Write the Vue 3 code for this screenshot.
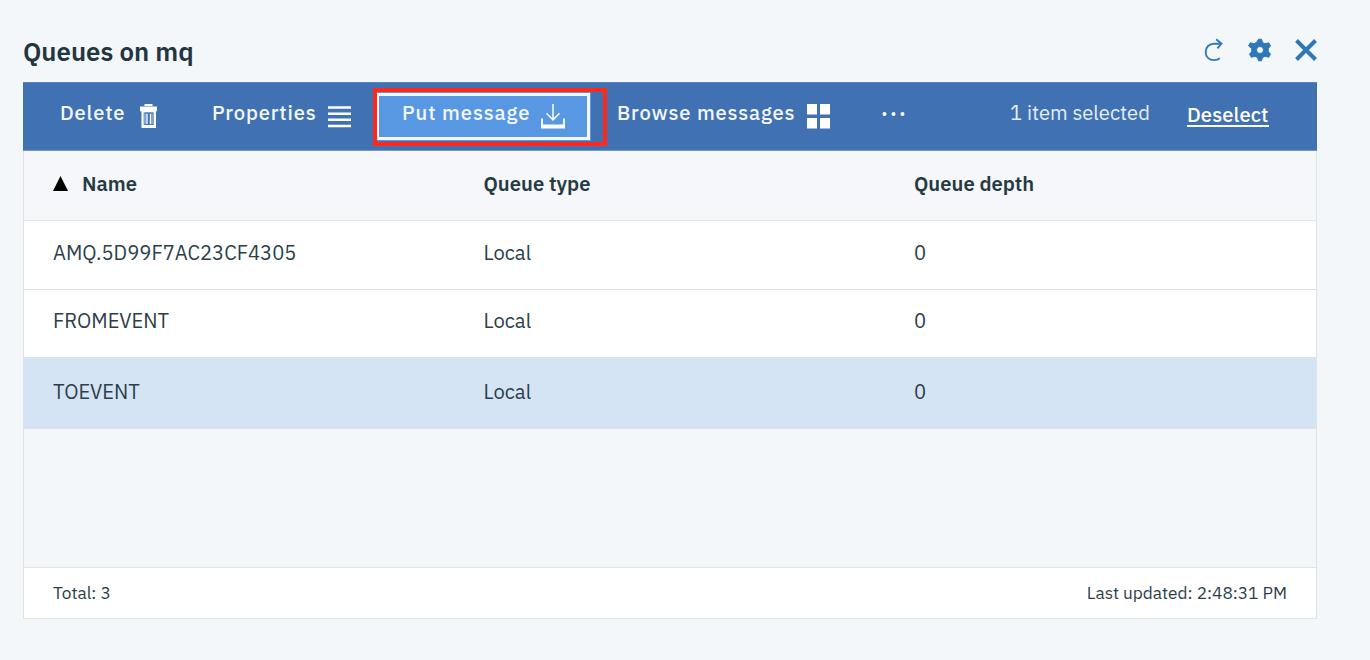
<script setup>
const rows = [
  { name: 'AMQ.5D99F7AC23CF4305', key: 'amq', type: 'Local', depth: 0 },
  { name: 'FROMEVENT', key: 'from', type: 'Local', depth: 0 },
  { name: 'TOEVENT', key: 'to', type: 'Local', depth: 0, selected: true },
]
</script>

<template>
  <main class="page">
    <header class="head">
      <h1><span>Queues on mq</span></h1>
      <div class="tools">
        <svg class="refresh" width="20" height="24" viewBox="0 0 20 24" fill="none" stroke="#3379b9" stroke-width="1.9">
          <path d="M15.800 20.200C14.200 21.600 12.400 22.100 10 22.100C5 22.100 1.700 18.800 1.700 14C1.700 9 5.200 5.700 10 5.700H17" />
          <path d="M12.200 1.200L17.500 5.700L13.400 10.300" />
        </svg>
        <svg class="gear" width="24" height="24" viewBox="0 0 24 24">
          <path fill="#3077b8" stroke="#3077b8" stroke-width="1" stroke-linejoin="round" fill-rule="evenodd" d="M10.500 1.200h3l1 3.300 2.500 1.200 3.700-.9 1.800 3-2.200 2.700v3l2.200 2.700-1.800 3-3.700-.9-2.500 1.200-1 3.300h-3l-1-3.300-2.500-1.200-3.700.9-1.800-3 2.200-2.700v-3L.5 7.800l1.800-3 3.700.9 2.500-1.200zM12 8.500a3.500 3.500 0 1 0 0 7 3.500 3.500 0 0 0 0-7z" />
        </svg>
        <svg class="close" width="22" height="22" viewBox="0 0 22 22" stroke="#3077b8" stroke-width="4">
          <path d="M1.500 1.500L20.500 20.500M20.500 1.500L1.500 20.500" />
        </svg>
      </div>
    </header>

    <section class="panel">
      <div class="toolbar">
        <div class="action delete">
          <span class="label">Delete</span>
          <svg width="17" height="24" viewBox="0 0 17 24">
            <path fill="#fff" d="M4.500 0h8v2h-8zM0 2.600h17v4.600h-1V24H1.500V7.200H0z" />
            <path fill="#7ea4d3" d="M3.500 8.500h10.500v12.500H3.500z" />
            <path d="M4.500 9H13M4.500 20.500H13" stroke="#4071b2" stroke-width="1.200" />
            <path d="M7 10V20M10.500 10V20" stroke="#fff" stroke-width="1" />
            <path d="M8.750 9V20.500" stroke="#4071b2" stroke-width="1.500" />
          </svg>
        </div>
        <div class="action properties">
          <span class="label">Properties</span>
          <svg width="23" height="22" viewBox="0 0 23 22" stroke="#fff" stroke-width="2.500">
            <path d="M0 1.500H23M0 7.700H23M0 13.800H23M0 19.900H23" />
          </svg>
        </div>
        <div class="action put">
          <span class="label">Put message</span>
          <svg width="24" height="25" viewBox="0 0 24 25" fill="none" stroke="#fff">
            <path d="M12 0V16M5.500 9.300L12 16L18.500 9.300" stroke-width="1.500" />
            <path d="M1 14.500V23M23 14.500V23" stroke-width="1.800" />
            <path d="M0 22.500H24" stroke-width="4" />
          </svg>
        </div>
        <div class="action browse">
          <span class="label">Browse messages</span>
          <svg width="23" height="25" viewBox="0 0 23 25" fill="#fff">
            <path d="M0 0H10V10.500H0zM13 0H23V10.500H13zM0 14H10V24.500H0zM13 14H23V24.500H13z" />
          </svg>
        </div>
        <svg class="more" width="23" height="6" viewBox="0 0 23 6" fill="#fff">
          <circle cx="2.500" cy="3" r="2" /><circle cx="11.500" cy="3" r="2" /><circle cx="20.500" cy="3" r="2" />
        </svg>
        <span class="count">1 item selected</span>
        <a class="deselect">Deselect</a>
      </div>

      <div class="row thead">
        <div class="first">
          <svg width="15" height="15" viewBox="0 0 15 15"><path d="M7.500 0L15 15H0z" /></svg>
          <span>Name</span>
        </div>
        <div>Queue type</div>
        <div>Queue depth</div>
      </div>
      <div v-for="r in rows" :key="r.key" class="row" :class="[r.key, { selected: r.selected }]">
        <div>{{ r.name }}</div>
        <div>{{ r.type }}</div>
        <div>{{ r.depth }}</div>
      </div>
      <div class="empty"></div>
      <footer class="foot">
        <span>Total: 3</span>
        <span>Last updated: 2:48:31 PM</span>
      </footer>
    </section>
  </main>
</template>

<style>
body { background: #f3f7fa; }
</style>

<style scoped>
*, *::after { box-sizing: border-box; }
.page {
  height: 660px;
  padding: 0 53px 0 23px;
  overflow: hidden;
  background: #f3f7fa;
  color: #2b3f4a;
  font-family: "IBM Plex Sans", Roboto, "Liberation Sans", sans-serif;
  font-size: 20.200px;
  white-space: nowrap;
}
.head { display: flex; justify-content: space-between; height: 82px; }
h1 { margin: 37px 0 0; font-size: 25.800px; line-height: 30px; font-weight: 600; color: #22363f; }
.tools { display: flex; margin-top: 38px; }
.refresh { margin: 0 24px 0 0; }
.gear { margin-right: 23px; }
.close { margin-top: 1px; }

.panel { width: 1294px; }
.toolbar {
  display: flex;
  height: 69px;
  padding-left: 37px;
  background: #4071b2;
  border-top: 1px solid #5b86bd;
  border-bottom: 1px solid #7196c8;
  color: #fff;
}
.action { display: flex; height: 48px; margin-top: 10px; padding-top: 7px; font-weight: 500; letter-spacing: .82px; line-height: 26px; color: #f3f7fd; }
.action svg { flex: none; }
.label { flex: none; }
.delete .label { width: 80px; }
.delete svg { margin: 4px 1px 0 0; }
.properties { margin-left: 54px; }
.properties .label { width: 116px; }
.properties svg { margin-top: 6px; }
.put {
  position: relative;
  width: 214px;
  height: 47px;
  margin-left: 25px;
  padding: 4px 0 0 23px;
  background: #5898e3;
  border: 3px solid #f5f9ff;
  outline: 1px solid #5898e3;
}
.put .label { width: 139px; letter-spacing: .9px; }
.put svg { margin-top: 4px; }
.put::after {
  content: "";
  position: absolute;
  top: -8px;
  left: -6px;
  width: 234px;
  height: 58px;
  border: 4px solid #ff291b;
}
.browse { margin-left: 27px; }
.browse .label { width: 190px; }
.browse svg { margin-top: 4px; }
.more { margin: 28px 0 0 52px; }
.count { width: 177px; margin: 17px 0 0 105px; line-height: 26px; color: #e6eef8; }
.deselect { height: 24px; margin-top: 20px; line-height: 24px; font-weight: 500; letter-spacing: .1px; border-bottom: 2px solid #fff; }

.row {
  display: grid;
  grid-template-columns: 430.500px 430.500px 1fr;
  height: 69px;
  padding: 19px 0 0 29px;
  line-height: 26px;
  background: #fff;
  border: 1px solid #dfe3e6;
  border-width: 0 1px 1px;
}
.thead { height: 70px; padding-top: 20px; background: #f5f7fa; font-weight: 600; color: #263a43; }
.first { display: flex; }
.first svg { margin: 5px 14px 0 0; }
.from { height: 68px; padding-top: 18px; }
.row.selected { height: 71px; padding-top: 21px; background: #d5e4f4; }
.empty { height: 139px; border: 1px solid #dfe3e6; border-width: 0 1px 1px; }
.foot {
  display: flex;
  justify-content: space-between;
  height: 51px;
  padding: 14px 29px 0;
  background: #fff;
  border: 1px solid #dfe3e6;
  border-top: 0;
  font-size: 17.250px;
  line-height: 22px;
}
</style>
